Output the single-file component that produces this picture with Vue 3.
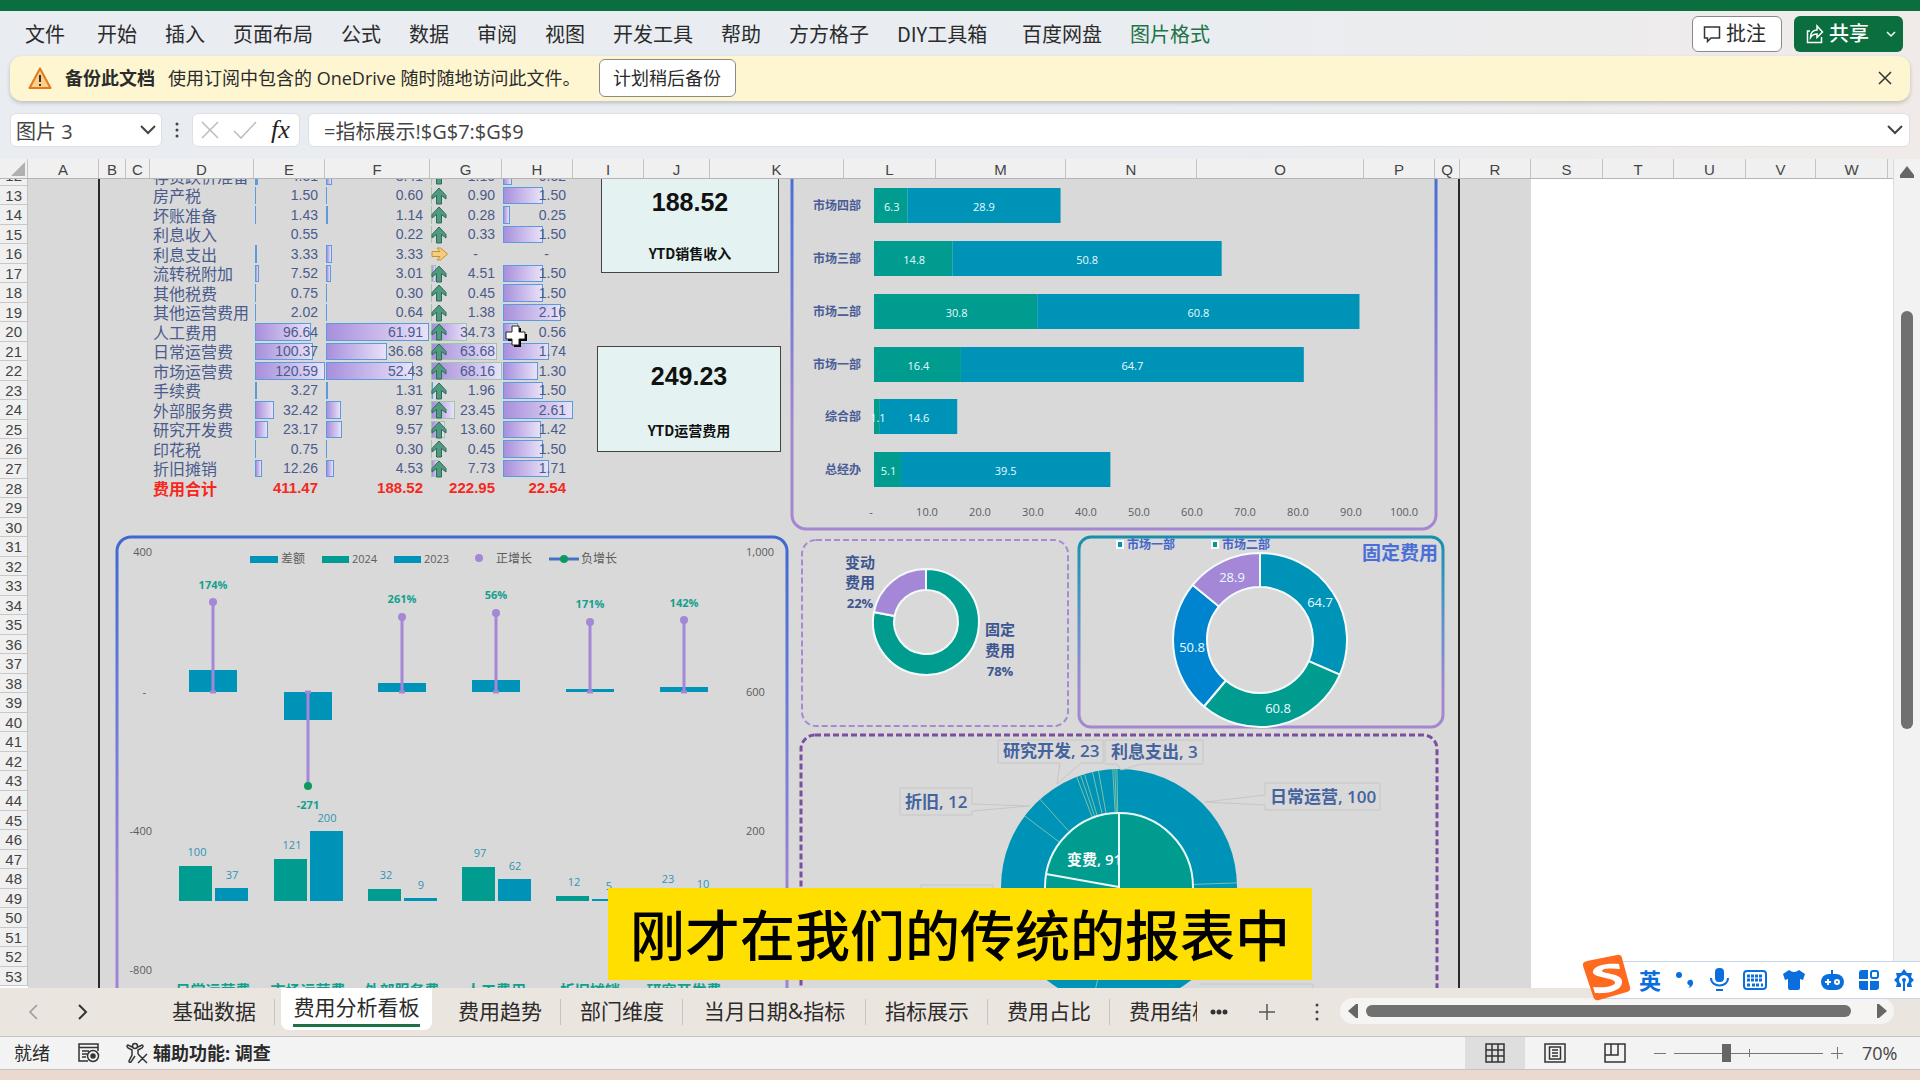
<script setup>
import { ref } from 'vue'

const menus = ['文件', '开始', '插入', '页面布局', '公式', '数据', '审阅', '视图', '开发工具', '帮助', '方方格子', 'DIY工具箱', '百度网盘', '图片格式']
const cellRef = ref('图片 3')
const formula = ref('=指标展示!$G$7:$G$9')
const zoom = ref(34)

const columns = [
  ['A', 71], ['B', 27], ['C', 24], ['D', 104], ['E', 71], ['F', 105], ['G', 72], ['H', 71], ['I', 71], ['J', 66], ['K', 134], ['L', 92],
  ['M', 130], ['N', 131], ['O', 167], ['P', 71], ['Q', 25], ['R', 71], ['S', 72], ['T', 71], ['U', 72], ['V', 70], ['W', 72]
]
const rowNumbers = Array.from({ length: 42 }, (_, i) => i + 12)

const expenses = [
  ['存货跌价准备', 4.51, 3.41, 1.1, 0.32],
  ['房产税', 1.5, 0.6, 0.9, 1.5],
  ['坏账准备', 1.43, 1.14, 0.28, 0.25],
  ['利息收入', 0.55, 0.22, 0.33, 1.5],
  ['利息支出', 3.33, 3.33, 0, 0],
  ['流转税附加', 7.52, 3.01, 4.51, 1.5],
  ['其他税费', 0.75, 0.3, 0.45, 1.5],
  ['其他运营费用', 2.02, 0.64, 1.38, 2.16],
  ['人工费用', 96.64, 61.91, 34.73, 0.56],
  ['日常运营费', 100.37, 36.68, 63.68, 1.74],
  ['市场运营费', 120.59, 52.43, 68.16, 1.3],
  ['手续费', 3.27, 1.31, 1.96, 1.5],
  ['外部服务费', 32.42, 8.97, 23.45, 2.61],
  ['研究开发费', 23.17, 9.57, 13.6, 1.42],
  ['印花税', 0.75, 0.3, 0.45, 1.5],
  ['折旧摊销', 12.26, 4.53, 7.73, 1.71]
]
const maxima = [0, 120.59, 61.91, 68.16, 2.61]
const barWidth = (v, c) => (v / maxima[c]) * 98 + '%'
const barClass = (v, c) => {
  const share = v / maxima[c]
  return ['bar', { green: c === 3, thin: share < 0.04 }]
}
const fmt = (v) => (v ? v.toFixed(2) : '-')

const departments = [
  { name: '市场四部', a: 6.3, b: 28.9, y: 188 },
  { name: '市场三部', a: 14.8, b: 50.8, y: 241 },
  { name: '市场二部', a: 30.8, b: 60.8, y: 294 },
  { name: '市场一部', a: 16.4, b: 64.7, y: 347 },
  { name: '综合部', a: 1.1, b: 14.6, y: 399 },
  { name: '总经办', a: 5.1, b: 39.5, y: 452 }
]
const axis = [10, 20, 30, 40, 50, 60, 70, 80, 90, 100]

const groups = [
  { name: '日常运营费', x: 213, top: 602, pct: '174%', label: 584, diff: 22, a: 100, ah: 35, b: 37, bh: 13 },
  { name: '市场运营费', x: 308, top: 786, pct: '-271', label: 804, diff: -28, a: 121, ah: 42, b: 200, bh: 70 },
  { name: '外部服务费', x: 402, top: 617, pct: '261%', label: 598, diff: 9, a: 32, ah: 12, b: 9, bh: 3 },
  { name: '人工费用', x: 496, top: 613, pct: '56%', label: 594, diff: 12, a: 97, ah: 34, b: 62, bh: 22 },
  { name: '折旧摊销', x: 590, top: 622, pct: '171%', label: 603, diff: 3, a: 12, ah: 5, b: 5, bh: 2 },
  { name: '研究开发费', x: 684, top: 620, pct: '142%', label: 602, diff: 5, a: 23, ah: 8, b: 10, bh: 4 }
]

const polar = (cx, cy, r, deg) => {
  const t = (deg * Math.PI) / 180
  return [cx + r * Math.sin(t), cy - r * Math.cos(t)].map((n) => n.toFixed(1)).join(' ')
}
const ring = (cx, cy, R, r, from, to) => {
  const big = to - from > 180 ? 1 : 0
  return `M${polar(cx, cy, R, from)}A${R} ${R} 0 ${big} 1 ${polar(cx, cy, R, to)}L${polar(cx, cy, r, to)}A${r} ${r} 0 ${big} 0 ${polar(cx, cy, r, from)}Z`
}
const slices = (cx, cy, R, r, parts) => {
  const total = parts.reduce((s, p) => s + p.v, 0)
  let at = 0
  return parts.map((p) => {
    const from = at
    at += (p.v / total) * 360
    return { d: ring(cx, cy, R, r, from, at), fill: p.fill }
  })
}
const costSplit = slices(926, 622, 53, 32, [{ v: 78, fill: '#009c8f' }, { v: 22, fill: '#a487d6' }])
const fixedCost = slices(1260, 640, 87, 53, [
  { v: 64.7, fill: '#0093b8' }, { v: 60.8, fill: '#009c8f' }, { v: 50.8, fill: '#0084cf' }, { v: 28.9, fill: '#a487d6' }
])
const spokes = [88, 193, 307, 318, 339, 341, 343, 347, 350, 357, 358, 359].map(
  (a) => `M${polar(1119, 887, 75, a)}L${polar(1119, 887, 118, a)}`
)

const tabs = ['基础数据', '费用分析看板', '费用趋势', '部门维度', '当月日期&指标', '指标展示', '费用占比', '费用结构']
</script>

<template>
  <div class="app">
    <div class="titlebar"></div>
    <header class="ribbon">
      <nav class="menu">
        <a v-for="m in menus" :key="m" href="#" :class="{ first: m === '文件', diy: m === 'DIY工具箱', active: m === '图片格式' }">{{ m }}</a>
      </nav>
      <button class="btn comment">
        <svg width="18" height="18" viewBox="0 0 18 18" fill="none" stroke="#333" stroke-width="1.500"><path d="M1.500 2h15v11H8l-3.500 3.500V13h-3z" /></svg>批注
      </button>
      <button class="btn share">
        <svg width="18" height="20" viewBox="0 0 18 20" fill="none" stroke="#fff" stroke-width="1.500"><path d="M4 7H1.500v11.500h14V13M4.500 13.500c0-5 3-7.500 6.500-7.500V2l5.500 6-5.500 5.500V10c-3 0-5 1-6.500 3.500z" /></svg><span>共享</span>
        <svg class="down" width="10" height="8" viewBox="0 0 10 8" fill="none" stroke="#fff" stroke-width="1.500"><path d="M1 2l4 4 4-4" /></svg>
      </button>
    </header>

    <div class="notice">
      <svg width="24" height="24" viewBox="0 0 24 24"><path d="M12 2.500L22.500 22H1.500z" fill="#fbd08a" stroke="#e07b1a" stroke-width="2" stroke-linejoin="round" /><path d="M12 9v7M12 18v2" stroke="#333" stroke-width="2" /></svg>
      <strong>备份此文档</strong>
      <span>使用订阅中包含的 OneDrive 随时随地访问此文件。</span>
      <button class="later">计划稍后备份</button>
      <button class="plain close" aria-label="关闭">
        <svg width="14" height="14" viewBox="0 0 14 14" stroke="#333" stroke-width="1.500"><path d="M1 1l12 12M13 1L1 13" /></svg>
      </button>
    </div>

    <div class="formula-row">
      <div class="box name-box">
        <input v-model="cellRef" aria-label="名称框" />
        <svg width="16" height="10" viewBox="0 0 16 10" fill="none" stroke="#444" stroke-width="2"><path d="M1 1l7 7 7-7" /></svg>
      </div>
      <svg class="grip" width="4" height="18" viewBox="0 0 4 18" fill="#444"><circle cx="2" cy="3" r="1.500" /><circle cx="2" cy="9" r="1.500" /><circle cx="2" cy="15" r="1.500" /></svg>
      <div class="box fx-box">
        <svg width="18" height="18" viewBox="0 0 18 18" stroke="#bbb" stroke-width="1.500"><path d="M1 1l16 16M17 1L1 17" /></svg>
        <svg width="24" height="18" viewBox="0 0 24 18" fill="none" stroke="#bbb" stroke-width="1.500"><path d="M1 10l7 7L23 1" /></svg>
        <em>fx</em>
      </div>
      <div class="box input-box">
        <input v-model="formula" aria-label="编辑栏" />
        <svg width="16" height="10" viewBox="0 0 16 10" fill="none" stroke="#444" stroke-width="2"><path d="M1 1l7 7 7-7" /></svg>
      </div>
    </div>

    <main class="sheet">
      <div class="grid-area">
        <div class="col-heads">
          <span class="corner"><svg width="28" height="20" viewBox="0 0 28 20"><path d="M25 3v14H11z" fill="#b0b0b0" /></svg></span>
          <span v-for="[c, w] in columns" :key="c" class="col" :style="{ width: w + 'px' }">{{ c }}</span>
        </div>
        <div class="body">
          <div class="row-heads"><span v-for="n in rowNumbers" :key="n">{{ n }}</span></div>
          <div class="canvas">
            <div class="board">
              <table>
                <colgroup><col class="w-name" /><col class="w-e" /><col class="w-f" /><col class="w-g" /><col class="w-e" /></colgroup>
                <tbody>
                  <tr v-for="r in expenses" :key="r[0]">
                    <th scope="row">{{ r[0] }}</th>
                    <td v-for="c in 4" :key="c" :class="{ dash: !r[c] }">
                      <i v-if="r[c] && !(r[c] < 0.6 && c < 3 && r[0] === '利息收入')" :class="barClass(r[c], c)" :style="{ width: barWidth(r[c], c) }"></i>
                      <svg v-if="c === 3 && r[c]" class="arrow" width="16" height="18" viewBox="0 0 16 18"><path d="M8 1l7 7.500v3.500L10.500 8.500V17h-5V8.500L1 12V8.500z" fill="#4f9a80" stroke="#2f6b56" /></svg>
                      <svg v-else-if="c === 3" class="arrow" width="18" height="18" viewBox="0 0 18 18"><path d="M1 6.500h8L6 3h3.500l7 6-7 6H6l3-3.500H1z" fill="#f6cd7c" stroke="#c98f2d" /></svg>
                      <b>{{ fmt(r[c]) }}</b>
                    </td>
                  </tr>
                  <tr class="total"><th scope="row">费用合计</th><td>411.47</td><td>188.52</td><td>222.95</td><td>22.54</td></tr>
                </tbody>
              </table>

              <div class="kpi sales"><strong>188.52</strong><span>YTD销售收入</span></div>
              <div class="kpi opex"><strong>249.23</strong><span>YTD运营费用</span></div>

              <svg class="charts" width="1503" height="812" viewBox="28 179 1503 812">
                <defs>
                  <linearGradient id="g-top" gradientUnits="userSpaceOnUse" x1="0" y1="179" x2="0" y2="530"><stop offset="0" stop-color="#4a6fd6" /><stop offset=".15" stop-color="#5a74d8" /><stop offset=".7" stop-color="#a487d0" /></linearGradient>
                  <linearGradient id="g-left" gradientUnits="userSpaceOnUse" x1="0" y1="536" x2="0" y2="988"><stop offset="0" stop-color="#3f68d0" /><stop offset=".3" stop-color="#5f78da" /><stop offset=".8" stop-color="#a084d4" /></linearGradient>
                  <linearGradient id="g-fixed" gradientUnits="userSpaceOnUse" x1="0" y1="536" x2="0" y2="729"><stop offset="0" stop-color="#168fac" /><stop offset=".4" stop-color="#5793c8" /><stop offset=".8" stop-color="#a487d0" /></linearGradient>
                </defs>

                <rect x="792" y="120" width="644" height="409" rx="14" fill="none" stroke="url(#g-top)" stroke-width="3" />
                <g v-for="d in departments" :key="d.name">
                  <text class="dept" x="861" :y="d.y + 17" text-anchor="end">{{ d.name }}</text>
                  <rect x="874" :y="d.y" :width="d.a * 5.3" height="35" fill="#009c8f" />
                  <rect :x="874 + d.a * 5.3" :y="d.y" :width="d.b * 5.3" height="35" fill="#0093b8" />
                  <text class="t11 white" :x="875 + d.a * 2.65" :y="d.y + 18">{{ d.a }}</text>
                  <text class="t11 white" :x="874 + (d.a + d.b / 2) * 5.3" :y="d.y + 18">{{ d.b }}</text>
                </g>
                <text class="t11 gray" x="871" y="511">-</text>
                <text v-for="a in axis" :key="a" class="t11 gray" :x="874 + a * 5.3" y="511">{{ a }}.0</text>

                <rect x="117" y="537" width="670" height="500" rx="14" fill="none" stroke="url(#g-left)" stroke-width="3" />
                <g class="t11 gray end"><text x="152" y="551">400</text><text x="146" y="691">-</text><text x="152" y="830">-400</text><text x="152" y="969">-800</text></g>
                <g class="t11 gray start"><text x="746" y="551">1,000</text><text x="746" y="691">600</text><text x="746" y="830">200</text></g>
                <g class="t12 gray start">
                  <rect x="250" y="556" width="28" height="7" fill="#0093b8" /><text x="281" y="558">差额</text>
                  <rect x="322" y="556" width="27" height="7" fill="#009c8f" /><text class="t11" x="352" y="558">2024</text>
                  <rect x="394" y="556" width="27" height="7" fill="#0093b8" /><text class="t11" x="424" y="558">2023</text>
                  <circle cx="479" cy="558" r="4" fill="#a487d6" /><text x="496" y="558">正增长</text>
                  <path d="M549 559h30" stroke="#4472c4" stroke-width="3" /><circle cx="564" cy="559" r="4" fill="#0c9a62" /><text x="581" y="558">负增长</text>
                </g>
                <g v-for="g in groups" :key="g.name">
                  <rect :x="g.x - 24" :y="g.diff > 0 ? 692 - g.diff : 692" width="48" :height="Math.abs(g.diff)" fill="#0093b8" />
                  <path :d="`M${g.x} ${g.top}V692M${g.x - 3} 692h6`" stroke="#a487d6" stroke-width="3" />
                  <circle :cx="g.x" :cy="g.top" r="4" :fill="g.diff > 0 ? '#a487d6' : '#0c9a62'" />
                  <text class="t11 pct" :x="g.x" :y="g.label">{{ g.pct }}</text>
                  <rect :x="g.x - 34" :y="901 - g.ah" width="33" :height="g.ah" fill="#009c8f" />
                  <rect :x="g.x + 2" :y="901 - g.bh" width="33" :height="g.bh" fill="#0093b8" />
                  <text class="t11 blue" :x="g.x - 16" :y="886 - g.ah">{{ g.a }}</text>
                  <text class="t11 blue" :x="g.x + 19" :y="887 - g.bh">{{ g.b }}</text>
                  <text class="cat" :x="g.x" y="990">{{ g.name }}</text>
                </g>

                <rect x="802" y="540" width="266" height="186" rx="14" fill="none" stroke="#a58bd3" stroke-width="2" stroke-dasharray="6 3" />
                <path v-for="s in costSplit" :key="s.d" :d="s.d" :fill="s.fill" stroke="#f4fbfb" stroke-width="2" />
                <g class="pie-label"><text x="860" y="562">变动</text><text x="860" y="582">费用</text><text class="t13" x="860" y="603">22%</text><text x="1000" y="629">固定</text><text x="1000" y="650">费用</text><text class="t13" x="1000" y="671">78%</text></g>

                <rect x="1079" y="537" width="364" height="190" rx="12" fill="none" stroke="url(#g-fixed)" stroke-width="3" />
                <g class="key"><rect x="1116" y="540" width="8" height="9" fill="#fff" /><rect x="1118" y="542" width="4" height="5" fill="#0093b8" /><text x="1127" y="544">市场一部</text><rect x="1211" y="540" width="8" height="9" fill="#fff" /><rect x="1213" y="542" width="4" height="5" fill="#009c8f" /><text x="1222" y="544">市场二部</text></g>
                <text class="fixed-title" x="1438" y="553">固定费用</text>
                <path v-for="s in fixedCost" :key="s.d" :d="s.d" :fill="s.fill" stroke="#f4fbfb" stroke-width="2" />
                <g class="t13 white"><text x="1232" y="577">28.9</text><text x="1320" y="602">64.7</text><text x="1192" y="647">50.8</text><text x="1278" y="708">60.8</text></g>

                <rect x="801" y="735" width="636" height="320" rx="14" fill="none" stroke="#7a4fa0" stroke-width="3" stroke-dasharray="6 3" />
                <circle cx="1119" cy="887" r="118" fill="#0093b8" />
                <path v-for="s in spokes" :key="s" :d="s" stroke="#7cc0a4" />
                <circle cx="1119" cy="887" r="74" fill="#009c8f" stroke="#e8faf8" stroke-width="2" />
                <path d="M1119 813V887L1046 874" fill="none" stroke="#e8faf8" stroke-width="2" />
                <g class="callouts">
                  <path d="M998 740h105v23h-22l-24 21 3-21h-62zM1105 740h98v24h-62l-20 6-4-6h-12zM900 788h72v16l58 2-58 5v4h-72zM1265 783h115v27h-115v-5l-60-3 60-7zM921 910v-25h72v25M1313 1000v-16h-114" />
                  <text x="1003" y="750">研究开发, 23</text><text x="1111" y="751">利息支出, 3</text><text x="905" y="801">折旧, 12</text><text x="1270" y="796">日常运营, 100</text>
                </g>
                <text class="inner" x="1067" y="859">变费, 91</text>
              </svg>

              <svg class="cursor" width="24" height="24" viewBox="0 0 24 24"><path d="M10 3h7v6h6v7h-6v6h-7v-6H4V9h6z" fill="#000" /><path d="M8 1h7v6h6v7h-6v6H8v-6H2V7h6z" fill="#fff" stroke="#222" /></svg>
            </div>
          </div>
        </div>
      </div>
      <div class="vscroll"><svg width="14" height="12" viewBox="0 0 14 12"><path d="M7 0l7 9v3H0V9z" fill="#666" /></svg><span></span></div>

      <p class="subtitle">刚才在我们的传统的报表中</p>

      <div class="ime">
        <svg class="sogou" width="50" height="48" viewBox="0 0 50 48"><path d="M5 7L35 1q4-1 5 3l8 29q1 4-3 5l-28 8q-5 1-6-4L1 12q-1-4 4-5z" fill="#ff6a1f" /><path d="M37 10c-12-1-24 1-26 7-2 7 20 6 22 11 1 4-9 6-22 5l2 6c15 1 28-3 27-12-1-8-19-7-20-10 0-3 9-3 18-2z" fill="#fff" /></svg>
        <b>英</b>
        <svg width="20" height="24" viewBox="0 0 20 24" fill="#0a6edc"><circle cx="4" cy="7" r="3" /><path d="M17 12c3 4-1 8-4 8 2-1 2-2 1-3-3-1-2-6 3-5z" /></svg>
        <svg width="20" height="26" viewBox="0 0 20 26"><rect x="6" y="1" width="9" height="14" rx="4" fill="#0a6edc" /><path d="M2 11c0 10 17 10 17 0M7 23h7" fill="none" stroke="#0a6edc" stroke-width="2" /></svg>
        <svg width="24" height="20" viewBox="0 0 24 20"><rect x="1" y="1" width="22" height="18" rx="3" fill="none" stroke="#0a6edc" stroke-width="2" /><path d="M4 6h16M4 10h16M4 15h3M9 15h7M18 15h2" stroke="#0a6edc" stroke-width="3" stroke-dasharray="3 1" /></svg>
        <svg width="24" height="22" viewBox="0 0 24 22"><path d="M7 1q5 4 10 0l6 4-2 6-3-1v9q0 2-2 2H8q-2 0-2-2v-9l-3 1-2-6z" fill="#0a6edc" /></svg>
        <svg width="25" height="22" viewBox="0 0 25 22"><path d="M12 1v6" stroke="#0a6edc" stroke-width="2" /><rect x="1" y="5" width="23" height="16" rx="8" fill="#0a6edc" /><path d="M5 13h6M8 10v6" stroke="#fff" stroke-width="2" /><circle cx="17" cy="13" r="2" fill="none" stroke="#fff" stroke-width="2" /></svg>
        <svg width="20" height="20" viewBox="0 0 20 20" fill="#0a6edc"><path d="M3 0h6v9H0V3q0-3 3-3zM0 11h9v9H3q-3 0-3-3zM11 11h9v6q0 3-3 3h-6z" /><rect x="12" y="1" width="7" height="7" rx="2" fill="none" stroke="#0a6edc" stroke-width="2" /></svg>
        <svg width="22" height="22" viewBox="0 0 22 22"><path d="M11 0l3 4h5l-1 4 3 3-3 3 1 4h-5l-3 4-3-4H3l1-4-3-3 3-3-1-4h5z" fill="#0a6edc" /><path d="M8 22v-7a5 5 0 1 1 6 0v7" fill="#fff" /><circle cx="11" cy="11" r="2" fill="#0a6edc" /><path d="M11 12v10" stroke="#0a6edc" stroke-width="2" /></svg>
      </div>
    </main>

    <nav class="tabbar">
      <div class="nav-arrows">
        <button class="plain" aria-label="上一个"><svg width="10" height="16" viewBox="0 0 10 16" fill="none" stroke="#999" stroke-width="1.500"><path d="M9 1L2 8l7 7" /></svg></button>
        <button class="plain" aria-label="下一个"><svg width="10" height="16" viewBox="0 0 10 16" fill="none" stroke="#333" stroke-width="2"><path d="M1 1l7 7-7 7" /></svg></button>
      </div>
      <div class="tabs">
        <button v-for="t in tabs" :key="t" class="tab" :class="{ selected: t === '费用分析看板', wide: t.includes('&') }"><span>{{ t }}</span></button>
      </div>
      <div class="tab-tools">
        <button class="plain" aria-label="更多"><svg width="18" height="6" viewBox="0 0 18 6" fill="#333"><circle cx="3" cy="3" r="2.500" /><circle cx="9" cy="3" r="2.500" /><circle cx="15" cy="3" r="2.500" /></svg></button>
        <button class="plain" aria-label="新建工作表"><svg width="18" height="18" viewBox="0 0 18 18" stroke="#555" stroke-width="1.500"><path d="M9 1v16M1 9h16" /></svg></button>
        <svg width="4" height="18" viewBox="0 0 4 18" fill="#444"><circle cx="2" cy="2" r="1.500" /><circle cx="2" cy="9" r="1.500" /><circle cx="2" cy="16" r="1.500" /></svg>
      </div>
      <div class="hscroll">
        <svg width="10" height="14" viewBox="0 0 10 14" fill="#666"><path d="M10 0v14H8L0 7l8-7z" /></svg><span></span>
        <svg width="10" height="14" viewBox="0 0 10 14" fill="#666"><path d="M0 0v14h2l8-7-8-7z" /></svg>
      </div>
    </nav>

    <footer class="status">
      <span>就绪</span>
      <svg class="macro" width="22" height="20" viewBox="0 0 22 20" fill="none" stroke="#333" stroke-width="1.500"><path d="M10 18H1V1h19v7M1 4.500h19M4 8h7M4 11h5M4 14h4" /><circle cx="15" cy="13" r="5.500" /><circle cx="15" cy="13" r="2" fill="#333" /></svg>
      <svg class="access" width="22" height="22" viewBox="0 0 22 22" fill="none" stroke="#333" stroke-width="1.500"><circle cx="9" cy="4" r="2.500" /><path d="M6 5L2 3q-2 1 0 3l4 2v5l-3 6q0 2 2 1l4-6M12 5l4-2q2 1 0 3l-4 2v4M12 12l9 9M21 12l-9 9" /></svg>
      <strong>辅助功能: 调查</strong>
      <div class="views">
        <button class="view on" aria-label="普通"><svg width="20" height="20" viewBox="0 0 20 20" fill="none" stroke="#333" stroke-width="1.500"><path d="M1 1h18v18H1zM7 1v18M13 1v18M1 7h18M1 13h18" /></svg></button>
        <button class="view" aria-label="页面布局"><svg width="22" height="20" viewBox="0 0 22 20" fill="none" stroke="#333" stroke-width="1.500"><path d="M1 1h20v18H1zM5.500 4h11v12h-11zM8 7h6M8 10h6M8 13h6" /></svg></button>
        <button class="view" aria-label="分页预览"><svg width="22" height="20" viewBox="0 0 22 20" fill="none" stroke="#333" stroke-width="1.500"><path d="M1 1h20v18H1zM1 12h13V1M7 1v11" /></svg></button>
      </div>
      <button class="plain step" aria-label="缩小"><svg width="12" height="12" viewBox="0 0 12 12" stroke="#777"><path d="M0 6.500h12" /></svg></button>
      <div class="slider"><input v-model="zoom" type="range" min="0" max="100" aria-label="显示比例" /></div>
      <button class="plain step" aria-label="放大"><svg width="12" height="12" viewBox="0 0 12 12" stroke="#777"><path d="M0 6.500h12M6.500 0v12" /></svg></button>
      <span class="percent">70%</span>
    </footer>
    <div class="desktop"></div>
  </div>
</template>

<style>
body { margin: 0; }
</style>

<style scoped>
* { box-sizing: border-box; }
.app {
  display: flex; flex-direction: column; height: 100vh; overflow: hidden;
  background: linear-gradient(90deg, #e9edf2, #e9edf1 60%, #f0ebe9);
  font-family: "Open Sans", "Noto Sans CJK SC", sans-serif; color: #2b2b2b;
}
button, input { font: inherit; color: inherit; }
.plain { border: 0; background: none; padding: 0; display: flex; align-items: center; }
.titlebar { height: 11px; background: #0a6e3f; flex: none; }
.ribbon { height: 45px; flex: none; display: flex; align-items: center; padding: 0 17px 0 25px; font-size: 20px; line-height: 28px; }
.menu { display: flex; gap: 28px; flex: 1; font-family: "Noto Sans CJK SC", sans-serif; }
.menu a { color: #2b2b2b; text-decoration: none; white-space: nowrap; }
.menu .first { margin-right: 4px; }
.menu .diy { min-width: 97px; }
.menu .active { color: #217346; }
.btn { height: 36px; display: flex; align-items: center; border-radius: 6px; padding: 0 12px; white-space: nowrap; }
.comment { border: 1px solid #8a8a8a; background: #fff; gap: 5px; width: 90px; margin-right: 12px; padding: 0 10px; }
.share { border: 0; background: #0a6e3f; color: #fff; gap: 5px; width: 109px; padding: 0 7px 0 12px; font-weight: 500; }
.share .down { margin-left: auto; }
.btn svg { flex: none; }
.notice {
  height: 45px; flex: none; margin: 0 10px; display: flex; align-items: center; padding: 0 18px 1px; border-radius: 12px;
  background: #fdf6d0; box-shadow: 0 2px 4px #0003; font-size: 18px; line-height: 26px;
}
.notice strong { margin: 0 13px; }
.later { margin-left: 18px; width: 137px; height: 38px; border: 1px solid #8a8a8a; border-radius: 6px; background: #fff; padding: 0; }
.close { margin-left: auto; }
.formula-row { height: 58px; flex: none; display: flex; align-items: center; padding: 0 10px; font-size: 20px; }
.box { height: 34px; background: #fff; border: 1px solid #dcdfe3; border-radius: 6px; display: flex; align-items: center; }
.box input { border: 0; outline: 0; background: none; padding: 0; min-width: 0; flex: 1; color: #444; }
.name-box { width: 152px; padding: 0 5px; }
.grip { margin: 0 13px; }
.fx-box { width: 108px; padding: 0 6px 0 8px; gap: 14px; margin-right: 8px; }
.fx-box em { font: italic 26px/28px "Liberation Serif", serif; color: #222; }
.input-box { flex: 1; padding: 0 6px 0 15px; }

.sheet { flex: 1; min-height: 0; display: flex; position: relative; }
.grid-area { flex: 1; min-width: 0; display: flex; flex-direction: column; overflow: hidden; }
.col-heads { height: 20px; flex: none; display: flex; background: #f0f0f0; border-bottom: 1px solid #b5b5b5; font: 15px/22px "Liberation Sans", sans-serif; color: #444; }
.corner { width: 28px; flex: none; border-right: 1px solid #c4c4c4; }
.col { flex: none; text-align: center; border-right: 1px solid #c4c4c4; }
.body { flex: 1; min-height: 0; display: flex; overflow: hidden; background: #fff; }
.row-heads { width: 28px; flex: none; height: 820px; margin-top: -13px; display: flex; flex-direction: column; background: #f0f0f0; border-right: 1px solid #c4c4c4; font: 15px/20px "Liberation Sans", sans-serif; color: #444; }
.row-heads span { flex: 1; min-height: 0; text-align: right; padding-right: 5px; border-bottom: 1px solid #c8c8c8; }
.canvas { flex: 1; min-width: 0; }
.board { position: relative; width: 1503px; height: 812px; background: #d9d9d9; overflow: hidden; }
.board::before { content: ""; position: absolute; left: 70px; right: 71px; top: 0; bottom: 0; border: solid #2a2a2a; border-width: 0 2px; }
table { position: relative; z-index: 1; margin: -13px 0 0 122px; width: 423px; height: 332px; table-layout: fixed; border-collapse: collapse; color: #4b5b8c; }
.w-name { width: 104px; }
.w-e { width: 71px; }
.w-f { width: 105px; }
.w-g { width: 72px; }
th { padding: 0 0 0 3px; text-align: left; font: 16px/18px "Noto Sans CJK SC", sans-serif; white-space: nowrap; }
td { position: relative; padding: 0 7px 0 0; text-align: right; font: 14px/18px "Liberation Sans", sans-serif; }
td b { position: relative; font-weight: 400; }
td.dash { padding-right: 24px; }
.total { color: #f5281e; }
.total th, .total td { font-weight: 700; }
.total td { font-size: 15px; }
.bar { position: absolute; left: 1px; top: 1px; bottom: 1px; background: linear-gradient(90deg, #a88fdc, #e8e2f8); border: 1px solid #5a9be0; min-width: 1px; }
.bar.green { border-color: #9fc6a6; }
.bar.thin { background: #5a9be0; border-width: 0 0 0 1px; }
.arrow { position: absolute; left: 1px; top: 1px; }
.kpi { position: absolute; z-index: 1; display: flex; flex-direction: column; align-items: center; justify-content: space-between; background: #e4f3f2; border: 1px solid #444; color: #111; padding: 11px 0; font: 500 15px/20px "Liberation Sans", "Noto Sans CJK SC", sans-serif; }
.kpi strong { font-size: 25px; line-height: 36px; }
.kpi span { font-weight: 600; font-family: "Noto Sans CJK SC", sans-serif; font-size: 14px; }
.sales { left: 573px; top: -12px; width: 178px; height: 106px; padding-top: 16px; padding-bottom: 9px; }
.opex { left: 569px; top: 167px; width: 184px; height: 106px; }
.charts { position: absolute; left: 0; top: 0; }
.charts text { dominant-baseline: central; }
.t11 { font-size: 11px; text-anchor: middle; }
.t12 { font-size: 12px; }
.t13 { font-size: 13px; text-anchor: middle; }
.white { fill: #e8fbff; }
.gray { fill: #5c5c5c; }
.blue { fill: #2f94b4; }
.charts .start, .charts .start text { text-anchor: start; }
.charts .end, .charts .end text { text-anchor: end; }
.dept { font-size: 12px; font-weight: 700; fill: #4a5d96; }
.pct { font-weight: 700; fill: #12a08e; }
.cat { font-size: 15px; font-weight: 700; fill: #12a08e; text-anchor: middle; }
.pie-label text { font-weight: 700; fill: #3d5690; text-anchor: middle; font-size: 15px; }
.pie-label .t13 { font-size: 13px; }
.key text { font-size: 12px; font-weight: 700; fill: #4566c8; }
.fixed-title { font-size: 19px; font-weight: 700; fill: #4a6fd8; text-anchor: end; }
.callouts path { fill: none; stroke: #c6c6c6; }
.callouts text { font-size: 17px; font-weight: 600; fill: #44639f; }
.inner { font-size: 15px; font-weight: 600; fill: #fff; }
.cursor { position: absolute; left: 476px; top: 146px; z-index: 2; }

.vscroll { width: 27px; flex: none; display: flex; flex-direction: column; align-items: center; background: #f3f2f2; border-left: 1px solid #e0dcda; padding-top: 7px; }
.vscroll span { width: 12px; height: 418px; margin-top: 133px; border-radius: 6px; background: #707070; }
.subtitle { position: absolute; z-index: 3; left: 50%; bottom: 8px; transform: translateX(-50%); margin: 0; padding: 0 22px 4px; background: #ffdf00; color: #000; font: 500 55px/88px "Noto Sans CJK SC", sans-serif; white-space: nowrap; }
.ime { position: absolute; z-index: 4; right: 0; bottom: -11px; width: 322px; height: 38px; display: flex; align-items: center; justify-content: space-between; padding: 0 5px 0 40px; background: #fff; border: 1px solid #c8d4e8; border-right: 0; }
.ime b { font-size: 22px; line-height: 30px; color: #0a6edc; }
.sogou { position: absolute; left: -17px; top: -8px; }

.tabbar { height: 48px; flex: none; display: flex; background: #ebe5e0; font-size: 21px; line-height: 30px; }
.nav-arrows { width: 153px; flex: none; display: flex; gap: 40px; padding-left: 28px; }
.tabs { width: 1044px; flex: none; display: flex; overflow: hidden; }
.tab { border: 0; background: linear-gradient(#c8c4c0, #c8c4c0) right center / 1px 26px no-repeat; padding: 0 19px 2px; flex: none; white-space: nowrap; }
.tab.wide { width: 183px; }
.tab.selected { height: 42px; padding: 0 12px; margin: 0 7px 0 6px; background: #fff; border-radius: 0 0 8px 8px; width: 151px; }
.selected span { display: block; border-bottom: 3px solid #1e7145; line-height: 32px; height: 36px; }
.tab-tools { width: 143px; flex: none; display: flex; align-items: center; padding-left: 13px; gap: 30px; }
.tab-tools svg { flex: none; }
.tab-tools > :nth-child(2) { margin-right: 9px; }
.hscroll { flex: 1; height: 26px; margin: 10px 26px 0 0; border-radius: 13px; background: #f5f4f3; display: flex; align-items: center; padding: 0 7px 0 8px; }
.hscroll span { flex: 1; height: 12px; margin: 0 26px 0 8px; border-radius: 6px; background: #707070; }
.status { height: 34px; flex: none; display: flex; align-items: center; background: #f3f3f3; border: solid #c6c2c0; border-width: 1px 0; padding: 0 20px 0 14px; font-size: 18px; line-height: 26px; }
.macro { margin: 0 26px 0 28px; }
.access { margin-right: 5px; }
.views { margin-left: auto; display: flex; align-self: stretch; margin-right: 9px; }
.view { width: 60px; border: 0; background: none; padding: 0; display: flex; align-items: center; justify-content: center; }
.view.on { background: #dedede; }
.slider { position: relative; margin: 0 8px; width: 149px; height: 20px; }
.slider::before { content: ""; position: absolute; left: 75px; top: 6px; width: 1px; height: 8px; background: #777; }
.slider input { appearance: none; position: relative; display: block; width: 100%; height: 20px; margin: 0; background: linear-gradient(#777, #777) center / 100% 1px no-repeat; }
.slider input::-webkit-slider-thumb { appearance: none; width: 9px; height: 18px; background: #666; }
.percent { margin-left: 19px; width: 38px; color: #444; }
.desktop { height: 10px; flex: none; background: #ead9cf; }
</style>
